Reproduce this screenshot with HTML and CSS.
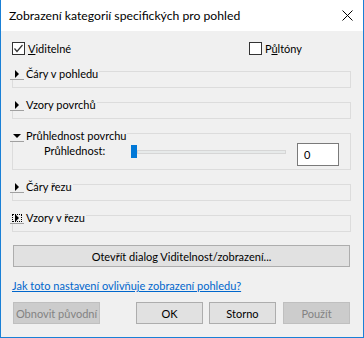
FILE: index.html
```html
<!DOCTYPE html>
<html lang="cs">
<head>
  <meta charset="UTF-8" />
  <title>Zobrazení kategorií specifických pro pohled</title>
  <link rel="stylesheet" href="styles.css">
</head>
<body>
  <div class="window">
    <div class="titlebar">
      <span class="title">Zobrazení kategorií specifických pro pohled</span>
      <svg class="close" width="11" height="11" viewBox="0 0 11 11">
        <path d="M0.5 0.5 L10.5 10.5 M10.5 0.5 L0.5 10.5" stroke="#000" stroke-width="1" fill="none"/>
      </svg>
    </div>

    <div class="content">
      <div class="check-row">
        <label class="check">
          <span class="box">
            <svg width="11" height="11" viewBox="0 0 11 11">
              <path d="M1.5 5.5 L4 8.5 L9.5 2" stroke="#333" stroke-width="1.2" fill="none"/>
            </svg>
          </span>
          <span><u>V</u>iditelné</span>
        </label>
        <label class="check">
          <span class="box"></span>
          <span>P<u>ů</u>ltóny</span>
        </label>
      </div>

      <div class="group">
        <div class="group-head">
          <span class="toggle"><span class="arrow-right"></span></span>
          <span class="group-title">Čáry v pohledu</span>
        </div>
      </div>

      <div class="group">
        <div class="group-head">
          <span class="toggle"><span class="arrow-right"></span></span>
          <span class="group-title">Vzory povrchů</span>
        </div>
      </div>

      <div class="group open">
        <div class="group-head">
          <span class="toggle"><span class="arrow-down"></span></span>
          <span class="group-title">Průhlednost povrchu</span>
        </div>
        <div class="group-body">
          <span class="field-label">Průhlednost:</span>
          <span class="slider">
            <span class="thumb"></span>
            <span class="track"></span>
          </span>
          <span class="num-input">0</span>
        </div>
      </div>

      <div class="group">
        <div class="group-head">
          <span class="toggle"><span class="arrow-right"></span></span>
          <span class="group-title">Čáry řezu</span>
        </div>
      </div>

      <div class="group">
        <div class="group-head">
          <span class="toggle focused"><span class="arrow-right"></span></span>
          <span class="group-title">Vzory v řezu</span>
        </div>
      </div>

      <button class="btn wide">Otevřít dialog Viditelnost/zobrazení...</button>

      <a class="help-link" href="#">Jak toto nastavení ovlivňuje zobrazení pohledu?</a>

      <div class="footer-buttons">
        <button class="btn reset" disabled>Obnovit původní</button>
        <button class="btn ok">OK</button>
        <button class="btn cancel">Storno</button>
        <button class="btn apply" disabled>Použít</button>
      </div>
    </div>
  </div>
</body>
</html>
```

FILE: styles.css
```css
* {
  margin: 0;
  padding: 0;
  box-sizing: border-box;
}
body {
  font-family: Lato, "Noto Sans", sans-serif;
  font-size: 11px;
  color: #000;
  background: #f0f0f0;
}
.window {
  width: 364px;
  height: 338px;
  border: 1px solid #1a80d6;
  border-top: none;
  background: #f0f0f0;
}
.titlebar {
  height: 31px;
  background: #fff;
  display: flex;
  align-items: center;
  justify-content: space-between;
  padding: 0 10px 0 8px;
}
.title {
  font-size: 12.2px;
}
.close {
  display: block;
}
.content {
  padding: 0 12px 0 11px;
}
.check-row {
  display: flex;
  margin-top: 11px;
  height: 13px;
  line-height: 13px;
}
.check {
  display: flex;
  align-items: center;
  gap: 3px;
}
.check:last-child {
  margin-left: auto;
  margin-right: 49px;
}
.box {
  width: 13px;
  height: 13px;
  border: 1px solid #333;
  background: #fff;
  display: flex;
  align-items: center;
  justify-content: center;
}
.box svg {
  display: block;
}
u {
  text-decoration: underline;
  text-underline-offset: 1px;
}
.group {
  border: 1px solid #dcdcdc;
  height: 17px;
  margin-top: 14px;
}
.check-row + .group {
  margin-top: 16px;
}
.group.open {
  height: 37px;
}
.group-head {
  display: flex;
  align-items: center;
  width: fit-content;
  height: 12px;
  margin: -4px 0 0 -3px;
  background: #f0f0f0;
  gap: 2px;
  padding-right: 1px;
}
.toggle {
  width: 14px;
  height: 12px;
  border-bottom: 1px solid #a0a0a0;
  display: flex;
  align-items: center;
  justify-content: center;
}
.toggle.focused {
  outline: 1px dotted #000;
  outline-offset: -3px;
}
.arrow-right {
  width: 0;
  height: 0;
  border-top: 4px solid transparent;
  border-bottom: 4px solid transparent;
  border-left: 4px solid #000;
}
.arrow-down {
  width: 0;
  height: 0;
  border-left: 4px solid transparent;
  border-right: 4px solid transparent;
  border-top: 4px solid #000;
}
.group-title {
  line-height: 12px;
}
.group-body {
  display: flex;
  align-items: flex-start;
  margin-top: 1px;
  padding-left: 31px;
  height: 23px;
}
.field-label {
  width: 87px;
  line-height: 13px;
  margin-top: 1px;
}
.slider {
  width: 155px;
  height: 13px;
  margin-top: 2px;
  display: flex;
  align-items: center;
}
.thumb {
  width: 6px;
  height: 13px;
  background: #0078d7;
}
.track {
  flex: 1;
  height: 4px;
  background: #e7eaea;
  border: 1px solid #d6d6d6;
}
.num-input {
  margin-left: 11px;
  width: 42px;
  height: 23px;
  border: 1px solid #7a7a7a;
  background: #fff;
  padding-left: 6px;
  line-height: 21px;
}
.btn {
  font-family: inherit;
  font-size: 11px;
  height: 22px;
  background: #e1e1e1;
  border: 1px solid #adadad;
  color: #000;
  white-space: nowrap;
}
.btn:disabled {
  background: #cccccc;
  border-color: #bfbfbf;
  color: #838383;
}
.wide {
  display: block;
  width: 337px;
  margin: 13px 0 0 1px;
}
.help-link {
  display: block;
  margin-top: 11px;
  line-height: 16px;
  color: #0066cc;
  text-decoration: underline;
  width: fit-content;
}
.footer-buttons {
  display: flex;
  margin: 8px 0 0 1px;
}
.reset {
  width: 87px;
}
.ok {
  width: 67px;
  margin-left: 36px;
}
.cancel {
  width: 67px;
  margin-left: 6px;
}
.apply {
  width: 67px;
  margin-left: 7px;
}
```
